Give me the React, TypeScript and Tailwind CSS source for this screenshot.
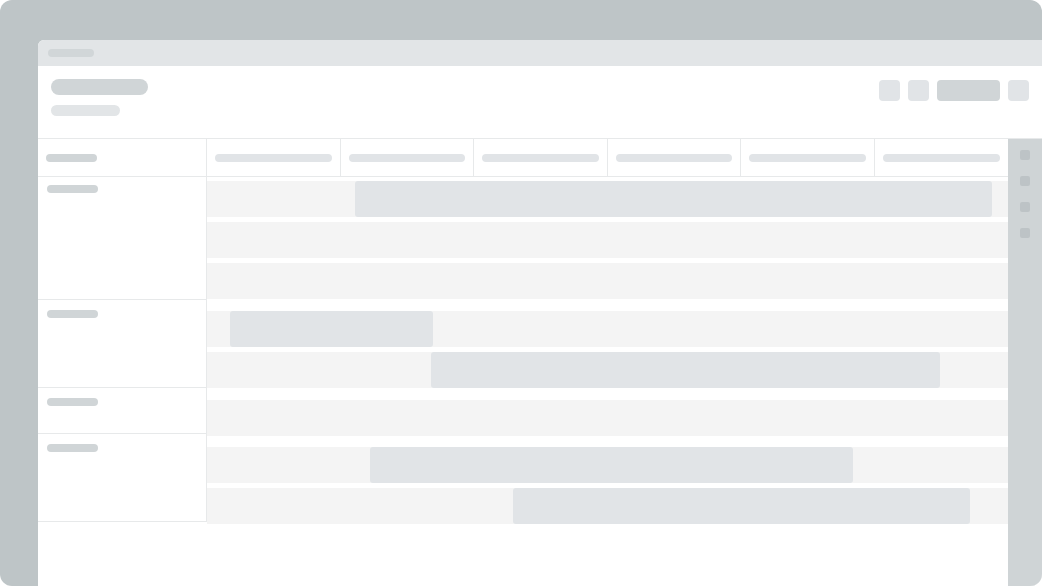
const groups = [
  { cell: "h-[123px] pt-[8px]", gap: "", lanes: [{ left: 148, width: 637 }, null, null] },
  { cell: "h-[88px] pt-[10px]", gap: "mt-[12px]", lanes: [{ left: 23, width: 203 }, { left: 224, width: 509 }] },
  { cell: "h-[46px] pt-[10px]", gap: "mt-[12px]", lanes: [null] },
  { cell: "h-[88px] pt-[10px]", gap: "mt-[11px]", lanes: [{ left: 163, width: 483 }, { left: 306, width: 457 }] },
];

function Pill({ className }: { className: string }) {
  return <div className={`rounded-full ${className}`} />;
}

export default function App() {
  return (
    <div className="h-[586px] w-[1042px] bg-white">
      <div className="flex h-full flex-col overflow-hidden rounded-[12px] bg-[#bec5c7] pl-[38px] pt-[40px]">
        <div className="flex flex-1 flex-col overflow-hidden rounded-tl-[6px] bg-white">
          {/* title bar */}
          <div className="flex h-[26px] shrink-0 items-center bg-[#e2e5e7] pl-[10px]">
            <Pill className="h-[8px] w-[46px] bg-[#d1d6d8]" />
          </div>

          {/* page header */}
          <div className="flex h-[73px] shrink-0 justify-between border-b border-[#e7e9ea] pl-[13px] pr-[13px] pt-[13px]">
            <div className="flex flex-col">
              <Pill className="h-[16px] w-[97px] bg-[#d0d5d7]" />
              <Pill className="mt-[10px] h-[11px] w-[69px] bg-[#e2e5e7]" />
            </div>
            <div className="flex gap-[8px] pt-[1px]">
              <div className="h-[21px] w-[21px] rounded-[4px] bg-[#e1e4e7]" />
              <div className="h-[21px] w-[21px] rounded-[4px] bg-[#e1e4e7]" />
              <div className="h-[21px] w-[63px] rounded-[4px] bg-[#d0d5d7]" />
              <div className="h-[21px] w-[21px] rounded-[4px] bg-[#e1e4e7]" />
            </div>
          </div>

          <div className="flex flex-1 overflow-hidden">
            <div className="flex flex-1 flex-col">
              {/* column header */}
              <div className="flex h-[38px] shrink-0 border-b border-[#e7e9ea]">
                <div className="flex w-[169px] shrink-0 items-center border-r border-[#e7e9ea] pl-[8px]">
                  <Pill className="h-[8px] w-[51px] bg-[#d0d5d7]" />
                </div>
                <div className="grid flex-1 grid-cols-6">
                  {[0, 1, 2, 3, 4, 5].map((i) => (
                    <div
                      key={i}
                      className={`flex items-center px-[8px] ${i < 5 ? "border-r border-[#e7e9ea]" : ""}`}
                    >
                      <Pill className="h-[8px] w-full bg-[#e1e4e7]" />
                    </div>
                  ))}
                </div>
              </div>

              {/* body */}
              <div className="flex flex-1">
                <div className="flex w-[169px] shrink-0 flex-col">
                  {groups.map((g, i) => (
                    <div
                      key={i}
                      className={`${g.cell} border-b border-r border-[#e7e9ea] pl-[9px]`}
                    >
                      <Pill className="h-[8px] w-[51px] bg-[#d0d5d7]" />
                    </div>
                  ))}
                </div>
                <div className="flex flex-1 flex-col pt-[4px]">
                  {groups.map((g, i) => (
                    <div key={i} className={`flex flex-col gap-[5px] ${g.gap}`}>
                      {g.lanes.map((bar, j) => (
                        <div key={j} className="flex h-[36px] bg-[#f4f4f4]">
                          {bar && (
                            <div
                              className="h-full rounded-[3px] bg-[#e1e4e7]"
                              style={{ marginLeft: bar.left, width: bar.width }}
                            />
                          )}
                        </div>
                      ))}
                    </div>
                  ))}
                </div>
              </div>
            </div>

            {/* right rail */}
            <div className="flex w-[34px] shrink-0 flex-col gap-[16px] bg-[#cfd4d6] pl-[12px] pt-[11px]">
              {[0, 1, 2, 3].map((i) => (
                <div key={i} className="h-[10px] w-[10px] rounded-[2px] bg-[#bdc3c6]" />
              ))}
            </div>
          </div>
        </div>
      </div>
    </div>
  );
}
